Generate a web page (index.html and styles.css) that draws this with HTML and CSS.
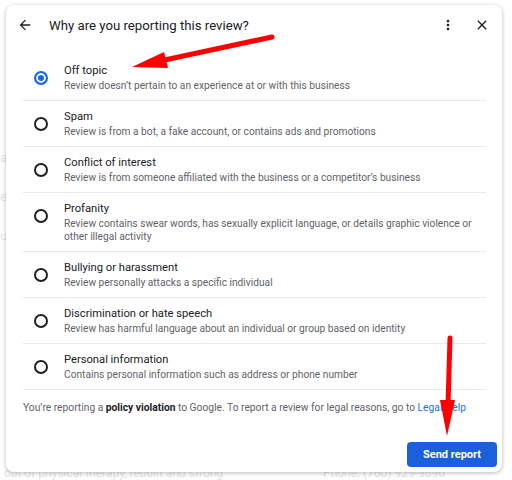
FILE: index.html
```html
<!DOCTYPE html>
<html lang="en">
	<head>
		<meta charset="UTF-8">
		<meta name="viewport" content="width=device-width, initial-scale=1.0">
		<title>Report review</title>
		<link rel="stylesheet" href="styles.css">
	</head>
	<body>
		<!-- faded page behind the dialog -->
		<div class="page">
			<div class="page-col">
				<p>a</p>
				<p>er</p>
				<p>u</p>
			</div>
			<div class="page-foot">
				<span>out of physical therapy, rebuilt and strong</span>
				<span class="phone">Phone: (760) 929-9690</span>
			</div>
		</div>

		<div class="dialog">
			<div class="header">
				<svg class="icon back" viewBox="0 0 24 24"><path d="M20 11H7.83l5.59-5.59L12 4l-8 8 8 8 1.41-1.41L7.83 13H20v-2z"/></svg>
				<h1 class="title">Why are you reporting this review?</h1>
				<svg class="icon more" viewBox="0 0 24 24"><path d="M12 8c1.1 0 2-.9 2-2s-.9-2-2-2-2 .9-2 2 .9 2 2 2zm0 2c-1.1 0-2 .9-2 2s.9 2 2 2 2-.9 2-2-.9-2-2-2zm0 6c-1.1 0-2 .9-2 2s.9 2 2 2 2-.9 2-2-.9-2-2-2z"/></svg>
				<svg class="icon close" viewBox="0 0 24 24"><path d="M19 6.41L17.59 5 12 10.59 6.41 5 5 6.41 10.59 12 5 17.59 6.41 19 12 13.41 17.59 19 19 17.59 13.41 12z"/></svg>
			</div>

			<div class="list">
				<div class="row">
					<span class="radio checked"></span>
					<div class="label">
						<div class="name">Off topic</div>
						<div class="desc">Review doesn’t pertain to an experience at or with this business</div>
					</div>
				</div>
				<div class="row">
					<span class="radio"></span>
					<div class="label">
						<div class="name">Spam</div>
						<div class="desc">Review is from a bot, a fake account, or contains ads and promotions</div>
					</div>
				</div>
				<div class="row">
					<span class="radio"></span>
					<div class="label">
						<div class="name">Conflict of interest</div>
						<div class="desc">Review is from someone affiliated with the business or a competitor’s business</div>
					</div>
				</div>
				<div class="row">
					<span class="radio"></span>
					<div class="label">
						<div class="name">Profanity</div>
						<div class="desc">Review contains swear words, has sexually explicit language, or details graphic violence or other illegal activity</div>
					</div>
				</div>
				<div class="row">
					<span class="radio"></span>
					<div class="label">
						<div class="name">Bullying or harassment</div>
						<div class="desc">Review personally attacks a specific individual</div>
					</div>
				</div>
				<div class="row">
					<span class="radio"></span>
					<div class="label">
						<div class="name">Discrimination or hate speech</div>
						<div class="desc">Review has harmful language about an individual or group based on identity</div>
					</div>
				</div>
				<div class="row">
					<span class="radio"></span>
					<div class="label">
						<div class="name">Personal information</div>
						<div class="desc">Contains personal information such as address or phone number</div>
					</div>
				</div>
			</div>

			<p class="note">You’re reporting a <b>policy violation</b> to Google. To report a review for legal reasons, go to <a href="#">Legal Help</a></p>

			<div class="actions">
				<button class="send">Send report</button>
			</div>
		</div>

		<!-- red annotation arrows -->
		<svg class="marks" viewBox="0 0 512 480">
			<line x1="272" y1="37" x2="160" y2="61" stroke="#f00" stroke-width="5" stroke-linecap="round"/>
			<polygon points="132,67 164,52 168,68" fill="#f00"/>
			<line x1="450" y1="338" x2="448" y2="405" stroke="#f00" stroke-width="5" stroke-linecap="round"/>
			<polygon points="447,436 440,400 455,400" fill="#f00"/>
		</svg>
	</body>
</html>
```

FILE: styles.css
```css
body{
	margin:0;
	width:512px;
	height:480px;
	overflow:hidden;
	background:#fff;
	font-family:Roboto,"Liberation Sans",sans-serif;
	position:relative;
}

/*背景页面*/
.page{
	height:480px;
	color:#e6e6ea;
	font-size:13px;
}

.page p{
	margin:0 0 24px;
}

.page-col{
	padding-top:150px;
}

.page-foot{
	position:absolute;
	left:0;
	right:0;
	bottom:0;
	display:flex;
	justify-content:space-between;
	padding:0 67px 0 4px;
	font-size:12px;
	line-height:14px;
	color:#e4e4e8;
}

/*弹出框*/
.dialog{
	position:absolute;
	left:6px;
	top:5px;
	width:496px;
	height:467px;
	background:#fff;
	border-radius:8px;
	box-shadow:0 1px 4px rgba(0,0,0,0.28);
	display:flex;
	flex-direction:column;
}

.header{
	height:40px;
	display:flex;
	align-items:center;
	padding:0 12px 0 11px;
}

.icon{
	width:16px;
	height:16px;
	fill:#202124;
	flex-shrink:0;
}

.title{
	margin:0 0 0 16px;
	flex-grow:1;
	font-size:13.2px;
	font-weight:400;
	color:#202124;
}

.more{
	margin-right:18px;
}

.list{
	margin:10px 16px 0 17px;
}

.row{
	display:flex;
	align-items:flex-start;
	padding:8px 0 8px;
	border-bottom:1px solid #e8eaed;
}

.radio{
	width:10px;
	height:10px;
	border:2px solid #202124;
	border-radius:50%;
	margin:8px 0 0 11px;
	flex-shrink:0;
}

.radio.checked{
	border-color:#1a66e8;
	background:#1a66e8;
	box-shadow:inset 0 0 0 2px #fff;
}

.label{
	margin-left:16px;
}

.name{
	font-size:11.2px;
	line-height:16px;
	color:#202124;
}

.desc{
	font-size:10.2px;
	line-height:13px;
	color:#5f6368;
}

.note{
	margin:10px 0 0 17px;
	font-size:10.25px;
	line-height:16px;
	color:#5f6368;
}

.note b{
	color:#202124;
}

.note a{
	color:#1a73e8;
	text-decoration:none;
}

.actions{
	margin-top:auto;
	display:flex;
	justify-content:flex-end;
	padding:0 5px 5px 0;
}

.send{
	width:90px;
	height:25px;
	border:none;
	border-radius:4px;
	background:#1a5fdc;
	color:#fff;
	font-family:Roboto,"Liberation Sans",sans-serif;
	font-size:11px;
	font-weight:700;
}

.marks{
	position:absolute;
	left:0;
	top:0;
	width:512px;
	height:480px;
	pointer-events:none;
}
```
